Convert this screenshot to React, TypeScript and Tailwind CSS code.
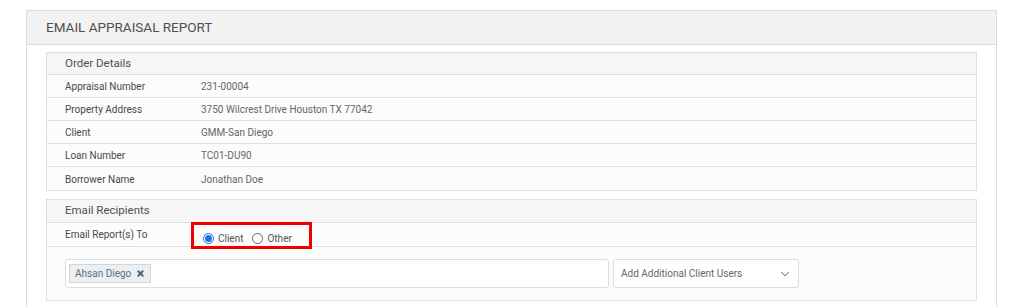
import { ChevronDown, X } from 'lucide-react';

const orderRows = [
  { label: 'Appraisal Number', value: '231-00004' },
  { label: 'Property Address', value: '3750 Wilcrest Drive Houston TX 77042' },
  { label: 'Client', value: 'GMM-San Diego' },
  { label: 'Loan Number', value: 'TC01-DU90' },
  { label: 'Borrower Name', value: 'Jonathan Doe' },
];

function Radio({ checked, label }: { checked: boolean; label: string }) {
  return (
    <label className="flex items-center gap-[4px]">
      {checked ? (
        <span className="flex h-[11px] w-[11px] items-center justify-center rounded-full border border-[#1a73e8] bg-white">
          <span className="h-[7px] w-[7px] rounded-full bg-[#1a73e8]" />
        </span>
      ) : (
        <span className="h-[11px] w-[11px] rounded-full border border-[#666] bg-white" />
      )}
      <span className="text-[10px] text-[#555]">{label}</span>
    </label>
  );
}

export default function App() {
  return (
    <div className="h-[307px] overflow-hidden bg-white pt-[10px] pl-[26px] pr-[27px] font-['Roboto',sans-serif]">
      <div className="h-[320px] border border-[#dcdcdc] bg-white">
        {/* panel title */}
        <div className="flex h-[34px] items-center border-b border-[#dcdcdc] bg-[#f2f2f2] pl-[19px]">
          <h1 className="text-[13.5px] text-[#505050]">EMAIL APPRAISAL REPORT</h1>
        </div>

        <div className="px-[19px] pt-[7px]">
          {/* order details */}
          <div className="border border-[#dde0dc] bg-[#fcfcfc]">
            <div className="flex h-[22px] items-center border-b border-[#dde0dc] bg-[#f6f6f6] pl-[18px] text-[11.5px] text-[#505050]">
              Order Details
            </div>
            {orderRows.map((row, i) => (
              <div
                key={row.label}
                className={`flex h-[23px] items-center pl-[18px] pt-[1px] text-[10px] ${
                  i < orderRows.length - 1 ? 'border-b border-[#dde0dc]' : ''
                }`}
              >
                <span className="w-[136px] text-[#484848]">{row.label}</span>
                <span className="text-[#666]">{row.value}</span>
              </div>
            ))}
          </div>

          {/* email recipients */}
          <div className="mt-[8px] border border-[#dde0dc] bg-[#fcfcfc]">
            <div className="flex h-[23px] items-center border-b border-[#dde0dc] bg-[#f6f6f6] pl-[18px] text-[11.5px] text-[#505050]">
              Email Recipients
            </div>
            <div className="flex h-[24px] items-center border-b border-[#dde0dc] pl-[18px]">
              <span className="w-[126px] -mt-[1px] text-[10px] text-[#484848]">Email Report(s) To</span>
              <div className="mt-[2px] flex h-[27px] w-[121px] items-center gap-[9px] border-[3px] border-[#ee0000] pl-[9px] pt-[6px]">
                <Radio checked label="Client" />
                <Radio checked={false} label="Other" />
              </div>
            </div>
            <div className="flex gap-[4px] pt-[12px] pb-[12px] pl-[18px]">
              <div className="flex h-[29px] w-[544px] items-center rounded-[3px] border border-[#dcdcdc] bg-white pl-[3px]">
                <span className="flex h-[19px] items-center gap-[5px] border border-[#cfd6dc] bg-[#eceff1] px-[5px] text-[10px] text-[#5d6f80]">
                  Ahsan Diego
                  <X className="h-[9px] w-[9px] text-[#4f6273]" strokeWidth={5} />
                </span>
              </div>
              <div className="flex h-[29px] w-[186px] items-center justify-between rounded-[3px] border border-[#dcdcdc] bg-white pl-[7px] pr-[6px]">
                <span className="text-[10px] text-[#666]">Add Additional Client Users</span>
                <ChevronDown className="h-[14px] w-[14px] text-[#777]" strokeWidth={1.75} />
              </div>
            </div>
          </div>
        </div>
      </div>
    </div>
  );
}
